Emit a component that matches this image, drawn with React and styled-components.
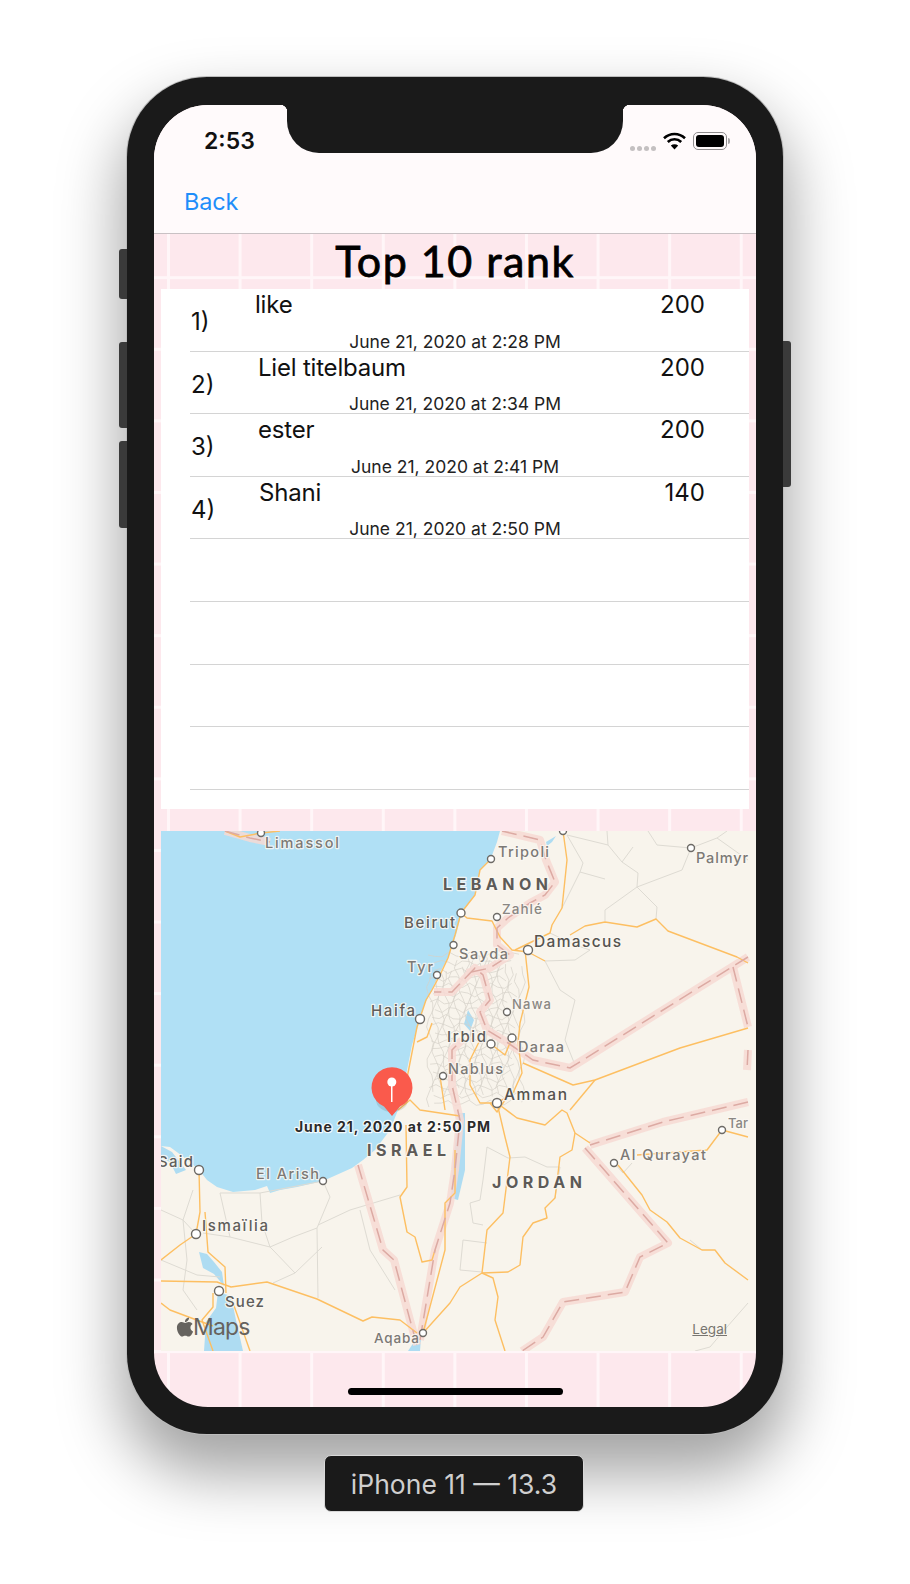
import React from 'react';
import styled, { createGlobalStyle } from 'styled-components';
import { FaApple } from 'react-icons/fa';

const GlobalStyle = createGlobalStyle`
  html, body { margin: 0; padding: 0; background: #fff; }
  body { font-family: "Inter", "Liberation Sans", sans-serif; }
`;

const Page = styled.div`
  width: 910px;
  height: 1584px;
  display: flex;
  flex-direction: column;
  align-items: center;
  padding-top: 77px;
  box-sizing: border-box;
  overflow: hidden;
  background: #fff;
`;

const Phone = styled.div`
  position: relative;
  width: 656px;
  height: 1357px;
  box-sizing: border-box;
  padding: 28px 27px;
  border-radius: 80px;
  background: #1a1a1a;
  box-shadow: 0 0 0 1px #bdbdbd, 0 34px 62px 6px rgba(0, 0, 0, 0.36);
  flex-shrink: 0;
`;

const SideButton = styled.div`
  position: absolute;
  top: ${(p) => p.$top}px;
  ${(p) => (p.$right ? 'right: -8px' : 'left: -8px')};
  width: 8px;
  height: ${(p) => p.$h}px;
  background: #3a3a3a;
  border-radius: ${(p) => (p.$right ? '0 3px 3px 0' : '3px 0 0 3px')};
`;

const Notch = styled.div`
  position: absolute;
  top: 28px;
  left: 160px;
  width: 336px;
  height: 48px;
  background: #1a1a1a;
  border-radius: 0 0 32px 32px;
  z-index: 2;

  &::before, &::after {
    content: '';
    position: absolute;
    top: 0;
    width: 7px;
    height: 7px;
  }
  &::before {
    left: -7px;
    background: radial-gradient(circle at 0 100%, transparent 7px, #1a1a1a 7.5px);
  }
  &::after {
    right: -7px;
    background: radial-gradient(circle at 100% 100%, transparent 7px, #1a1a1a 7.5px);
  }
`;

const Screen = styled.div`
  width: 602px;
  height: 1302px;
  border-radius: 54px;
  overflow: hidden;
  display: flex;
  flex-direction: column;
  background-color: #fde8ed;
  background-image:
    linear-gradient(90deg, #fff6f8 0, #fff6f8 3px, transparent 3px),
    linear-gradient(180deg, #fff6f8 0, #fff6f8 3px, transparent 3px);
  background-size: 71.6px 71.6px;
  background-position: 13px 28px;
`;

const Header = styled.header`
  height: 129px;
  box-sizing: border-box;
  background: #fffafb;
  border-bottom: 1px solid #c9c1c4;
  display: flex;
  flex-direction: column;
  flex-shrink: 0;
`;

const StatusBar = styled.div`
  height: 66px;
  display: flex;
  align-items: flex-start;
  justify-content: space-between;
  padding: 24px 29px 0 50px;
`;

const Clock = styled.span`
  font-size: 23px;
  line-height: 24px;
  font-weight: 600;
  color: #111;
`;

const StatusIcons = styled.div`
  display: flex;
  align-items: center;
  gap: 7px;
  height: 22px;
  margin-top: 1px;
`;

const SignalDots = styled.div`
  display: flex;
  gap: 2px;
  margin-top: 14px;
`;

const SignalDot = styled.i`
  width: 5px;
  height: 5px;
  border-radius: 50%;
  background: #c4c0c1;
`;

const Battery = styled.div`
  position: relative;
  width: 34px;
  height: 18px;
  box-sizing: border-box;
  padding: 2px;
  border: 1px solid #8f8c8d;
  border-radius: 5px;

  &::before {
    content: '';
    display: block;
    height: 100%;
    background: #000;
    border-radius: 3px;
  }
  &::after {
    content: '';
    position: absolute;
    right: -4px;
    top: 5px;
    width: 2px;
    height: 6px;
    background: #a9a6a7;
    border-radius: 0 2px 2px 0;
  }
`;

const NavBar = styled.div`
  flex: 1;
  display: flex;
  align-items: center;
  padding: 0 0 17px 30px;
`;

const BackLink = styled.a`
  font-size: 23.5px;
  letter-spacing: -0.2px;
  color: #1f8efa;
`;

const Title = styled.h1`
  margin: 0;
  height: 55px;
  flex-shrink: 0;
  text-align: center;
  font-family: "Lato", sans-serif;
  font-size: 43px;
  line-height: 54px;
  font-weight: 400;
  letter-spacing: 1.5px;
  -webkit-text-stroke: 0.8px #000;
  color: #000;
`;

const Table = styled.section`
  height: 520px;
  flex-shrink: 0;
  margin: 0 7px;
  background: #fff;
`;

const Row = styled.div`
  height: 62.6px;
  box-sizing: border-box;
  margin-left: 29px;
  border-bottom: 1px solid #d4d4d4;
  display: grid;
  grid-template-columns: 65px 1fr auto;
  grid-template-rows: 1fr auto;
  color: #111;
`;

const Rank = styled.span`
  grid-row: 1 / 3;
  grid-column: 1;
  align-self: center;
  font-size: 24px;
  margin: 4px 0 0 1px;
`;

const Name = styled.span`
  grid-row: 1;
  grid-column: 2;
  margin-left: ${(p) => p.$indent}px;
  font-size: 24px;
  line-height: 32px;
  letter-spacing: -0.2px;
`;

const Score = styled.span`
  grid-row: 1;
  grid-column: 3;
  margin-right: ${(p) => p.$gap}px;
  font-size: 24px;
  line-height: 32px;
`;

const DateLine = styled.span`
  grid-row: 2;
  grid-column: 1 / 4;
  justify-self: center;
  margin-right: 29px;
  font-size: 17.5px;
  line-height: 19px;
  color: #222;
`;

const MapFrame = styled.div`
  position: relative;
  height: 520px;
  margin: 22px 0 0 7px;
  overflow: hidden;
  flex-shrink: 0;
  background: #f8f4ec;

  svg.map { display: block; }
`;

const MapLabel = styled.text`
  font-family: "Inter", "Liberation Sans", sans-serif;
  font-size: ${(p) => p.$size || 15}px;
  font-weight: ${(p) => p.$weight || 500};
  fill: ${(p) => p.$fill || '#6f6c68'};
  stroke: ${(p) => p.$halo || '#fbf8f3'};
  stroke-width: 2.4px;
  stroke-opacity: 0.85;
  paint-order: stroke;
  stroke-linejoin: round;
  dominant-baseline: central;
`;

const MapsMark = styled.div`
  position: absolute;
  left: 13px;
  bottom: 10px;
  display: flex;
  align-items: center;
  color: #66635f;
  font-size: 23px;
  line-height: 28px;
  letter-spacing: -0.8px;

  svg { margin-right: -3px; }
`;

const LegalLink = styled.a`
  position: absolute;
  right: 29px;
  bottom: 13px;
  font-size: 13.5px;
  line-height: 18px;
  color: #77746f;
  text-decoration: underline;
`;

const Footer = styled.footer`
  flex: 1;
  display: flex;
  justify-content: center;
  padding-top: 37px;
`;

const HomeBar = styled.div`
  width: 215px;
  height: 7px;
  border-radius: 4px;
  background: #000;
`;

const DeviceTag = styled.div`
  width: 260px;
  height: 57px;
  margin: 21px 2px 0 0;
  flex-shrink: 0;
  display: flex;
  align-items: center;
  justify-content: center;
  background: #1a1a1a;
  border: 1px solid #d8d8d8;
  box-sizing: border-box;
  border-radius: 7px;
  color: #cfcfcf;
  font-size: 26.5px;
  position: relative;
`;

const scores = [
  { rank: '1)', name: 'like', indent: 0, score: 200, gap: 44, date: 'June 21, 2020 at 2:28 PM' },
  { rank: '2)', name: 'Liel titelbaum', indent: 3, score: 200, gap: 44, date: 'June 21, 2020 at 2:34 PM' },
  { rank: '3)', name: 'ester', indent: 3, score: 200, gap: 44, date: 'June 21, 2020 at 2:41 PM' },
  { rank: '4)', name: 'Shani', indent: 4, score: 140, gap: 44, date: 'June 21, 2020 at 2:50 PM' },
];

const SEA = 'M161 831H500L497 842L491 858L480 870L476 893L462 912L456 935L448 958L438 976L431 992L424 1005L420 1020L412 1045L406 1075L400 1105L390 1130L375 1150L363 1160L352 1168L323 1181L297 1187L280 1190L270 1193L267 1186L255 1190L233 1192L217 1187L207 1180L199 1170L185 1158L170 1147L161 1146Z';

const WATER = [
  'M218 1292L231 1296L236 1320L243 1351H204L206 1322L216 1308Z',
  'M199 1252L207 1254L214 1262L222 1272L224 1286L214 1274L203 1268Z',
  'M408 1351L414 1342L421 1338L420 1351Z',
  'M458 1113L465 1113L465 1170L458 1200L451 1198L453 1165Z',
  'M468 1010L474 1020L470 1031L464 1024Z',
  'M546 842L556 836L552 842L547 846Z',
  'M161 1146L172 1152L186 1170L176 1174L170 1162L161 1158Z',
];

const BORDERS = [
  'M748 957L570 1068L533 1060L508 1043L487 1030L480 1012L490 1000L483 975L475 968L452 992L434 992',
  'M502 831L540 840L546 860L555 882L545 895L530 903L508 918L497 928L497 945L510 955L490 968L467 973',
  'M733 967L748 1027',
  'M748 1050L747 1070',
  'M748 1102L663 1122L590 1145',
  'M585 1148L668 1243L640 1257L625 1292L563 1302L543 1337L522 1351',
  'M358 1165L383 1250L394 1260L410 1320L417 1345',
  'M420 1340L435 1250L450 1203L455 1170L460 1120L452 1085L452 1050L462 1040',
  'M225 831L250 838L270 842',
];

const ROADS = [
  'M491 859L480 870L475 895L461 913L455 935L448 958L440 975L432 990L426 1000L417 1027L408 1073L403 1100',
  'M432 1023L427 1037L417 1042',
  'M563 831L567 860L562 908L552 925L550 933L515 950',
  'M570 935L585 926L605 922L637 927L656 919L668 931L737 957L748 963',
  'M461 913L467 918L492 921L500 937L512 950L528 952L545 961',
  'M525 950L529 987L520 1023L518 1043L522 1073L513 1093L497 1103',
  'M523 1063L573 1085L595 1080L680 1048L748 1028',
  'M595 1080L570 1110',
  'M497 1103L517 1118L545 1125L562 1110L567 1113L575 1133L590 1143',
  'M575 1133L572 1150L560 1157L555 1198L545 1208L547 1218L533 1223L523 1237L520 1265L508 1272L482 1273',
  'M497 1103L505 1137L510 1157L503 1213L487 1230L482 1273L460 1287L450 1303L423 1333',
  'M482 1273L493 1278L498 1297L495 1320L505 1351',
  'M618 1165L642 1195L650 1210L667 1222L680 1238L702 1250L715 1250L725 1263L748 1280',
  'M637 1155L707 1150L722 1130L748 1137',
  'M199 1170L200 1212L196 1234L180 1245L161 1260',
  'M205 1212L208 1252L225 1267L226 1293',
  'M161 1281L217 1282L231 1287L267 1282L317 1299L363 1321L372 1317L400 1320L417 1333',
  'M161 1303L170 1310L202 1322L213 1326',
  'M232 1300L250 1351',
  'M213 1293L213 1307L202 1320L213 1351',
  'M406 1125L407 1187L400 1197L407 1232L415 1237L422 1262L432 1260L435 1250',
  'M455 1150L455 1193L445 1203L445 1250L423 1333',
  'M398 1110L410 1100L420 1110L460 1116',
  'M480 1040L470 1060L470 1085L480 1103L497 1103',
  'M491 1044L505 1055L512 1038',
  'M440 1076L445 1110',
  'M225 831L240 837L261 833L280 831',
  'M505 1100L497 1112L490 1103',
];

const MINOR = [
  'M567 835L608 845L622 862L638 873L637 887L605 910L605 921',
  'M622 862L633 847',
  'M637 887L682 870L691 848L717 838L727 831',
  'M717 838L748 860',
  'M637 887L657 907L656 919',
  'M648 831L657 845L691 848',
  'M607 831L608 845',
  'M567 835L583 863L580 872L605 879',
  'M580 872L562 908',
  'M550 933L575 945L590 950L575 960L545 961',
  'M545 961L560 990L575 1000L565 1040L575 1065',
  'M220 1193L230 1237L203 1233',
  'M230 1237L270 1247L293 1237L317 1228L330 1197L323 1181',
  'M260 1193L262 1223L270 1247L273 1250L295 1273L273 1283',
  'M295 1273L322 1247',
  'M317 1228L318 1298',
  'M318 1225L350 1210L400 1195',
  'M360 1210L370 1250L395 1290',
  'M161 1210L183 1220L196 1234',
  'M193 1190L183 1220L187 1260L183 1290L197 1310',
  'M161 1260L197 1275L220 1277',
  'M220 1193L260 1193L323 1181',
  'M487 1147L508 1158L525 1157L547 1167L560 1167',
  'M487 1147L483 1180L480 1200L470 1203L473 1223L483 1225',
  'M463 1240L460 1270L482 1272',
  'M463 1240L487 1243',
  'M614 1163L623 1173L632 1163',
  'M748 1303L727 1327L710 1347L695 1351',
  'M560 1167L555 1198',
  'M702 1250L690 1240',
];

const CITIES = [
  { text: 'Limassol', x: 265, end: 339, y: 842, dot: [261, 833, 3.5], fill: '#7c7975', size: 14.5 },
  { text: 'Tripoli', x: 498, end: 549, y: 851, dot: [491, 859, 3.5], fill: '#7c7975', size: 14.5 },
  { text: 'Palmyr', x: 696, end: 748, y: 857, dot: [691, 848, 3.5], fill: '#7c7975', size: 14.5 },
  { text: 'Zahlé', x: 502, end: 542, y: 909, dot: [497, 917, 3.5], fill: '#8a8783', size: 13.5 },
  { text: 'Beirut', x: 404, end: 455, y: 922, dot: [461, 913, 4], fill: '#605d5a', size: 15 },
  { text: 'Damascus', x: 534, end: 621, y: 941, dot: [528, 950, 4.5], fill: '#55534f', size: 15.5 },
  { text: 'Sayda', x: 459, end: 508, y: 953, dot: [453.5, 945, 3.5], fill: '#7c7975', size: 14.5 },
  { text: 'Tyr', x: 407, end: 433, y: 966, dot: [437, 975, 3.5], fill: '#7c7975', size: 14.5 },
  { text: 'Nawa', x: 512, end: 551, y: 1004, dot: [507, 1012, 3.5], fill: '#8a8783', size: 13 },
  { text: 'Haifa', x: 371, end: 415, y: 1010, dot: [420, 1019, 4.5], fill: '#605d5a', size: 15 },
  { text: 'Irbid', x: 447, end: 486, y: 1036, dot: [491, 1044, 4], fill: '#605d5a', size: 15 },
  { text: 'Daraa', x: 518, end: 564, y: 1046, dot: [512, 1038, 4], fill: '#7c7975', size: 14.5 },
  { text: 'Nablus', x: 448, end: 503, y: 1068, dot: [443, 1076, 3.5], fill: '#7c7975', size: 14.5 },
  { text: 'Amman', x: 504, end: 567, y: 1094, dot: [497, 1103, 4.5], fill: '#55534f', size: 15.5 },
  { text: 'Tar', x: 728, end: 748, y: 1123, dot: [722, 1130, 3.5], fill: '#8a8783', size: 13 },
  { text: 'Al Qurayat', x: 620, end: 706, y: 1154, dot: [614, 1163, 3.5], fill: '#7c7975', size: 14.5 },
  { text: 'Said', x: 158, end: 193, y: 1161, dot: [199, 1170, 4.5], fill: '#605d5a', size: 15 },
  { text: 'El Arish', x: 256, end: 319, y: 1173, dot: [323, 1181, 3.5], fill: '#7c7975', size: 14.5 },
  { text: 'Ismaïlia', x: 202, end: 268, y: 1225, dot: [196, 1234, 4.5], fill: '#605d5a', size: 15 },
  { text: 'Suez', x: 225, end: 264, y: 1301, dot: [219, 1291, 4.5], fill: '#605d5a', size: 15 },
  { text: 'Aqaba', x: 374, end: 419, y: 1338, dot: [423, 1333, 3.5], fill: '#7c7975', size: 13.5 },
];

const COUNTRIES = [
  { text: 'LEBANON', x: 443, end: 548, y: 884 },
  { text: 'ISRAEL', x: 367, end: 446, y: 1150 },
  { text: 'JORDAN', x: 492, end: 582, y: 1182 },
];

// dense little road mesh around the Jordan valley, edges left uneven on purpose
function meshPaths() {
  const out = [];
  for (let i = 0; i < 18; i++) {
    const x = 430 + i * 5.4;
    const top = 945 + Math.abs(x - 482) * 0.5 + 12 * Math.abs(Math.sin(i * 1.3));
    const bottom = 1108 - 14 * Math.abs(Math.sin(i * 0.9));
    let d = `M${x} ${top.toFixed(1)}`;
    for (let y = top + 8; y < bottom; y += 8) {
      d += `L${(x + 3.5 * Math.sin(i * 2.1 + y * 0.17)).toFixed(1)} ${y.toFixed(1)}`;
    }
    out.push(d);
  }
  for (let j = 0; j < 20; j++) {
    const y = 955 + j * 7.8;
    const from = 428 + 7 * Math.abs(Math.sin(j * 1.1));
    const to = 522 - 12 * Math.abs(Math.sin(j * 0.7));
    let d = `M${from.toFixed(1)} ${y}`;
    for (let x = from + 7; x < to; x += 7) {
      d += `L${x.toFixed(1)} ${(y + 3 * Math.sin(j * 1.7 + x * 0.29)).toFixed(1)}`;
    }
    out.push(d);
  }
  return out;
}

function MapDrawing() {
  return (
    <svg className="map" width="595" height="520" viewBox="161 831 595 520">
      <rect x="161" y="831" width="595" height="520" fill="#f8f4ec" />
      <path d={SEA} fill="#b0e0f5" />
      {WATER.map((d, i) => <path key={i} d={d} fill="#aedcf2" />)}
      <g fill="none" stroke="#dedbd3" strokeWidth="1">
        {MINOR.map((d, i) => <path key={i} d={d} />)}
      </g>
      <g fill="none" stroke="#d5d1c9" strokeWidth="0.7">
        {meshPaths().map((d, i) => <path key={i} d={d} />)}
      </g>
      <g fill="none" strokeLinejoin="round">
        {BORDERS.map((d, i) => <path key={i} d={d} stroke="#f7d9d4" strokeWidth="8" opacity="0.85" />)}
      </g>
      <g fill="none" stroke="#fdbf62" strokeWidth="1.4" strokeLinejoin="round">
        {ROADS.map((d, i) => <path key={i} d={d} />)}
      </g>
      <g fill="none" stroke="#dcaaa3" strokeWidth="1.5" strokeDasharray="15 7">
        {BORDERS.map((d, i) => <path key={i} d={d} />)}
      </g>
      {CITIES.map((c) => (
        <circle key={c.text} cx={c.dot[0]} cy={c.dot[1]} r={c.dot[2]} fill="#fff" stroke="#6d6a66" strokeWidth="1.4" />
      ))}
      <circle cx="563" cy="831" r="3.5" fill="#fff" stroke="#6d6a66" strokeWidth="1.4" />
      {CITIES.map((c) => (
        <MapLabel key={c.text} x={c.x} y={c.y} $size={c.size} $fill={c.fill} textLength={c.end - c.x} lengthAdjust="spacing">
          {c.text}
        </MapLabel>
      ))}
      {COUNTRIES.map((c) => (
        <MapLabel key={c.text} x={c.x} y={c.y} $size={16} $weight={700} $fill="#5d5a57" textLength={c.end - c.x} lengthAdjust="spacing">
          {c.text}
        </MapLabel>
      ))}
      <MapLabel x="295" y="1126" $size={14} $weight={700} $fill="#2b2b2b" $halo="#ffffff" textLength="195" lengthAdjust="spacing">
        June 21, 2020 at 2:50 PM
      </MapLabel>
      <ellipse cx="392" cy="1100" rx="16" ry="12" fill="#000" opacity="0.1" />
      <path d="M392 1116L384 1106.500A20.500 20.500 0 1 1 400 1106.500Z" fill="#fa5a4c" />
      <rect x="391" y="1084" width="1.5" height="18" fill="#fff" />
      <circle cx="391.800" cy="1082" r="4.500" fill="#fff" />
    </svg>
  );
}

function WifiIcon() {
  return (
    <svg width="23" height="18" viewBox="0 0 23 18">
      <path d="M1 6.200C7 .600 16 .600 22 6.200" fill="none" stroke="#000" strokeWidth="2.600" />
      <path d="M4.800 10C8.600 6.400 14.400 6.400 18.200 10" fill="none" stroke="#000" strokeWidth="2.600" />
      <path d="M11.500 17.500L7.800 13.500C10 11.700 13 11.700 15.200 13.500Z" fill="#000" />
    </svg>
  );
}

export default function App() {
  const rows = Array.from({ length: 8 }, (_, i) => scores[i] || null);
  return (
    <Page>
      <GlobalStyle />
      <Phone>
        <SideButton $top={172} $h={50} />
        <SideButton $top={265} $h={86} />
        <SideButton $top={364} $h={87} />
        <SideButton $right $top={264} $h={146} />
        <Notch />
        <Screen>
          <Header>
            <StatusBar>
              <Clock>2:53</Clock>
              <StatusIcons>
                <SignalDots>
                  {[0, 1, 2, 3].map((d) => <SignalDot key={d} />)}
                </SignalDots>
                <WifiIcon />
                <Battery />
              </StatusIcons>
            </StatusBar>
            <NavBar>
              <BackLink>Back</BackLink>
            </NavBar>
          </Header>
          <Title>Top 10 rank</Title>
          <Table>
            {rows.map((row, i) => (
              <Row key={i}>
                {row && (
                  <>
                    <Rank>{row.rank}</Rank>
                    <Name $indent={row.indent}>{row.name}</Name>
                    <Score $gap={row.gap}>{row.score}</Score>
                    <DateLine>{row.date}</DateLine>
                  </>
                )}
              </Row>
            ))}
          </Table>
          <MapFrame>
            <MapDrawing />
            <MapsMark><FaApple size={22} />Maps</MapsMark>
            <LegalLink>Legal</LegalLink>
          </MapFrame>
          <Footer>
            <HomeBar />
          </Footer>
        </Screen>
      </Phone>
      <DeviceTag>iPhone 11 — 13.3</DeviceTag>
    </Page>
  );
}
